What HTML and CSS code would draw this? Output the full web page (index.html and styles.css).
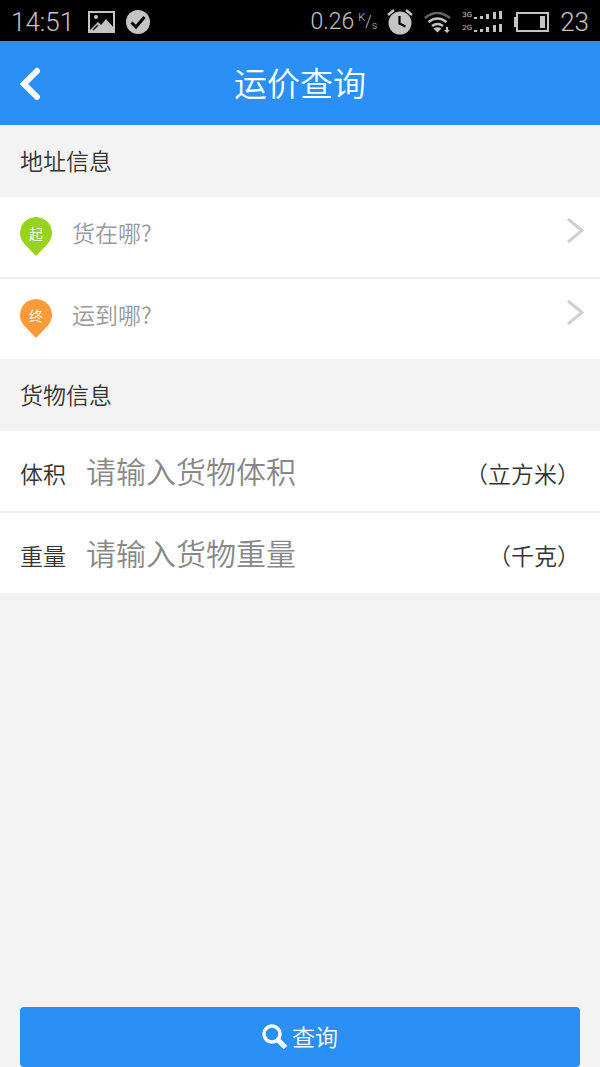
FILE: index.html
```
<!DOCTYPE html>
<html lang="zh-CN">
<head>
    <meta charset="UTF-8">
    <meta name="viewport" content="width=device-width, initial-scale=1.0">
    <title>运价查询</title>
    <link rel="stylesheet" href="styles.css">
</head>
<body>
    <div class="status-bar">
        <span>14:51</span>
        <svg class="icon-picture" width="27" height="22" viewBox="0 0 27 22">
            <rect x="1" y="1" width="25" height="20" fill="none" stroke="#c4c4c4" stroke-width="2"/>
            <circle cx="8" cy="6" r="2" fill="#c4c4c4"/>
            <path d="M2 20v-1l8-8 3 3 5-6 8 9v3z" fill="#c4c4c4"/>
            <path d="M5 19l5-5" stroke="#000" stroke-width="1.500"/>
        </svg>
        <svg class="icon-check" width="24" height="24" viewBox="0 0 24 24">
            <circle cx="12" cy="12" r="12" fill="#c4c4c4"/>
            <path d="M5.500 12.500l4.500 4.500 8.500-10" fill="none" stroke="#000" stroke-width="3"/>
        </svg>
        <span class="speed">0.26</span>
        <span class="speed-unit"><sup>K</sup>/<sub>s</sub></span>
        <svg class="icon-alarm" width="26" height="26" viewBox="0 0 26 26">
            <circle cx="13" cy="14" r="11.500" fill="#c4c4c4"/>
            <path d="M1 6l6-5M25 6l-6-5" stroke="#c4c4c4" stroke-width="2.500"/>
            <path d="M12.500 7v7.500l6 3" fill="none" stroke="#000" stroke-width="2.200"/>
        </svg>
        <svg class="icon-wifi" width="27" height="22" viewBox="0 0 27 22">
            <g fill="none" stroke="#c4c4c4" stroke-width="2.600">
                <path d="M1 7q12-10 25 0" stroke="#666"/>
                <path d="M4.500 11q9-7 18 0"/>
                <path d="M8 15q5.500-4 11 0"/>
            </g>
            <path d="M9.500 17.500q4-2.500 8 0l-4 4z" fill="#c4c4c4"/>
            <path d="M22 16h2v3h2l-3 3-3-3h2z" fill="#c4c4c4"/>
        </svg>
        <div class="signals">
            <div class="signal">
                <span>3G</span>
                <svg width="29" height="8" viewBox="0 0 29 8" fill="#c4c4c4">
                    <path d="M0 6h3v2H0zM6 5h3v3H6zM12 3h3v5h-3zM19 1h3v7h-3zM25 0h3v8h-3z"/>
                </svg>
            </div>
            <div class="signal">
                <span>2G</span>
                <svg width="29" height="8" viewBox="0 0 29 8" fill="#c4c4c4">
                    <path d="M0 6h3v2H0zM6 5h3v3H6zM12 3h3v5h-3zM19 1h3v7h-3zM25 0h3v8h-3z"/>
                </svg>
            </div>
        </div>
        <svg class="icon-battery" width="35" height="20" viewBox="0 0 35 20">
            <rect x="3" y="1" width="31" height="18" fill="none" stroke="#c4c4c4" stroke-width="2"/>
            <path d="M0 5h3v10H0zM26 4h5v12h-5z" fill="#c4c4c4"/>
        </svg>
        <span>23</span>
    </div>

    <header class="header">
        <button type="button" class="back" aria-label="返回">
            <svg width="20" height="34" viewBox="0 0 20 34">
                <path d="M17 5L4 18l13 13" fill="none" stroke="#fff" stroke-width="6" stroke-linecap="round"/>
            </svg>
        </button>
        <h1>运价查询</h1>
    </header>

    <form class="query-form">
        <h2>地址信息</h2>
        <div class="group">
            <a class="row address" href="#from">
                <span class="pin pin-start">
                    <svg width="32" height="39" viewBox="0 0 32 39"><path d="M16 0a16 16 0 0 1 11.800 26.800L16 39 4.200 26.800A16 16 0 0 1 16 0z"/></svg>
                    <span>起</span>
                </span>
                <span class="address-text">货在哪?</span>
                <svg class="arrow" width="18" height="27" viewBox="0 0 18 27">
                    <path d="M2 2l14 11.500L2 25" fill="none" stroke="#d0d0d0" stroke-width="3"/>
                </svg>
            </a>
            <a class="row address" href="#to">
                <span class="pin pin-end">
                    <svg width="32" height="39" viewBox="0 0 32 39"><path d="M16 0a16 16 0 0 1 11.800 26.800L16 39 4.200 26.800A16 16 0 0 1 16 0z"/></svg>
                    <span>终</span>
                </span>
                <span class="address-text">运到哪?</span>
                <svg class="arrow" width="18" height="27" viewBox="0 0 18 27">
                    <path d="M2 2l14 11.500L2 25" fill="none" stroke="#d0d0d0" stroke-width="3"/>
                </svg>
            </a>
        </div>

        <h2>货物信息</h2>
        <div class="group">
            <div class="row field">
                <label for="volume">体积</label>
                <input type="text" id="volume" placeholder="请输入货物体积">
                <span>（立方米）</span>
            </div>
            <div class="row field">
                <label for="weight">重量</label>
                <input type="text" id="weight" placeholder="请输入货物重量">
                <span>（千克）</span>
            </div>
        </div>

        <button type="submit" class="submit">
            <svg width="26" height="26" viewBox="0 0 26 26">
                <circle cx="10" cy="10" r="8" fill="none" stroke="#fff" stroke-width="3.500"/>
                <path d="M16 16l7.500 7.500" stroke="#fff" stroke-width="5"/>
            </svg>
            <span>查询</span>
        </button>
    </form>
</body>
</html>
```
FILE: styles.css
```
* {
    box-sizing: border-box;
}
body {
    display: flex;
    flex-direction: column;
    min-height: 100vh;
    margin: 0;
    font-family: "Noto Sans CJK SC", sans-serif;
    font-weight: 350;
    font-size: 23px;
    line-height: 30px;
    color: #333;
    background: #f3f3f3;
}
h1, h2 {
    margin: 0;
    font-weight: inherit;
}
svg {
    display: block;
    flex: none;
}
input, button {
    padding: 0;
    border: none;
    background: none;
    font: inherit;
}

/* status bar */
.status-bar {
    display: flex;
    align-items: center;
    height: 41px;
    padding: 2px 11px 0;
    font-family: Roboto, sans-serif;
    font-weight: 300;
    font-size: 26px;
    color: #c4c4c4;
    background: #000;
}
.icon-picture {
    margin-left: 14px;
}
.icon-check {
    margin-left: 11px;
}
.speed {
    margin-left: auto;
    font-size: 23px;
}
.speed-unit {
    display: flex;
    margin-left: 4px;
    font-size: 16px;
    line-height: 20px;
}
.speed-unit sup, .speed-unit sub {
    font-size: 11px;
    line-height: 12px;
}
.speed-unit sub {
    align-self: flex-end;
}
.icon-alarm {
    margin-left: 10px;
}
.icon-wifi {
    margin-left: 11px;
}
.signals {
    display: grid;
    gap: 5px;
    margin-left: 11px;
}
.signal {
    display: flex;
    align-items: center;
    gap: 2px;
    font-size: 8px;
    font-weight: 400;
    line-height: 8px;
}
.icon-battery {
    margin: 0 11px;
}

/* title bar */
.header {
    display: grid;
    grid-template-columns: 60px 1fr 60px;
    align-items: center;
    height: 84px;
    color: #fff;
    background: #2a90f6;
}
.header h1 {
    padding-bottom: 2px;
    font-size: 33px;
    line-height: 48px;
    text-align: center;
}
.back {
    padding-left: 20px;
    cursor: pointer;
}

/* form */
.query-form {
    display: flex;
    flex: 1;
    flex-direction: column;
}
.query-form h2 {
    padding: 20px 20px 22px;
    font-size: 23px;
}
.group {
    background: #fff;
}
.row {
    display: flex;
    height: 80px;
    padding: 20px;
}
.row + .row {
    height: 82px;
    border-top: 2px solid #f0f0f0;
}
.address {
    padding-right: 16px;
    color: #999;
    text-decoration: none;
}
.address-text {
    flex: 1;
    margin-left: 20px;
}
.pin {
    position: relative;
    width: 32px;
}
.pin span {
    position: absolute;
    inset: 0;
    font-size: 14px;
    line-height: 32px;
    text-align: center;
    color: #fff;
}
.pin-start {
    fill: #97d31b;
}
.pin-end {
    fill: #fb9b38;
}
.field {
    align-items: baseline;
    padding-top: 17px;
}
.field input {
    flex: 1;
    min-width: 0;
    margin-left: 20px;
    font-size: 30px;
    line-height: 44px;
    color: #333;
    outline: none;
}
.field input::placeholder {
    color: #888;
}
.submit {
    display: flex;
    align-items: center;
    justify-content: center;
    gap: 4px;
    height: 60px;
    margin: auto 20px 0;
    border-radius: 4px;
    color: #fff;
    background: #2a90f6;
    cursor: pointer;
}
.submit span {
    padding-bottom: 2px;
}
```
